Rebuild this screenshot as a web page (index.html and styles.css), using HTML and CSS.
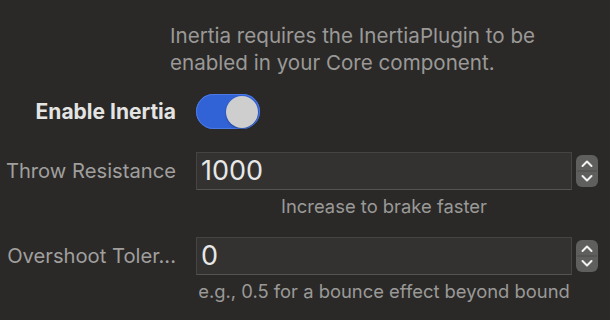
FILE: index.html
```html
<!DOCTYPE html>
<html lang="en">
<head>
    <meta charset="UTF-8">
    <title>Inertia settings</title>
    <link rel="stylesheet" href="styles.css">
</head>
<body>
    <div class="panel">
        <p class="note">Inertia requires the InertiaPlugin to be enabled in your Core component.</p>

        <div class="row row-toggle">
            <label class="label label-strong">Enable Inertia</label>
            <div class="control">
                <div class="switch on"><span class="knob"></span></div>
            </div>
        </div>

        <div class="row row-field">
            <label class="label">Throw Resistance</label>
            <div class="control">
                <div class="field">
                    <div class="input">1000</div>
                    <div class="stepper">
                        <svg width="22" height="32" viewBox="0 0 22 32">
                            <line x1="1" y1="16" x2="21" y2="16" stroke="#4c4c4c" stroke-width="1"/>
                            <polyline points="6.5,11 11,6.5 15.5,11" fill="none" stroke="#f2f2f2" stroke-width="2" stroke-linecap="round" stroke-linejoin="round"/>
                            <polyline points="6.5,21 11,25.5 15.5,21" fill="none" stroke="#f2f2f2" stroke-width="2" stroke-linecap="round" stroke-linejoin="round"/>
                        </svg>
                    </div>
                </div>
                <div class="help">Increase to brake faster</div>
            </div>
        </div>

        <div class="row row-field">
            <label class="label">Overshoot Toler...</label>
            <div class="control">
                <div class="field">
                    <div class="input">0</div>
                    <div class="stepper">
                        <svg width="22" height="32" viewBox="0 0 22 32">
                            <line x1="1" y1="16" x2="21" y2="16" stroke="#4c4c4c" stroke-width="1"/>
                            <polyline points="6.5,11 11,6.5 15.5,11" fill="none" stroke="#f2f2f2" stroke-width="2" stroke-linecap="round" stroke-linejoin="round"/>
                            <polyline points="6.5,21 11,25.5 15.5,21" fill="none" stroke="#f2f2f2" stroke-width="2" stroke-linecap="round" stroke-linejoin="round"/>
                        </svg>
                    </div>
                </div>
                <div class="help">e.g., 0.5 for a bounce effect beyond bound</div>
            </div>
        </div>
    </div>
</body>
</html>
```

FILE: styles.css
```css
/* Panneau de réglages Inertia (thème sombre) */
html, body {
    margin: 0;
    background: #2a2927;
}

body {
    font-family: Inter, "Noto Sans", sans-serif;
    color: #9d9d9c;
    width: 610px;
    height: 320px;
    overflow: hidden;
}

.panel {
    padding: 22px 12px 0 0;
}

.note {
    margin: 0 0 0 170px;
    font-size: 20.6px;
    line-height: 27px;
    color: #9a9998;
}

.row {
    display: grid;
    grid-template-columns: 176px 1fr;
    column-gap: 20px;
}

.label {
    text-align: right;
    font-size: 20.2px;
    color: #a09f9e;
    white-space: nowrap;
}

.label-strong {
    font-size: 21px;
    font-weight: 700;
    color: #e4e4e3;
}

.row-toggle {
    align-items: center;
    margin-top: 18px;
}

.switch {
    width: 64px;
    height: 35px;
    border-radius: 18px;
    background: #3263d6;
    box-shadow: inset 0 0 0 1px #4a78e4;
    display: flex;
    align-items: center;
    justify-content: flex-end;
    padding: 0 2px;
    box-sizing: border-box;
}

.knob {
    width: 32px;
    height: 32px;
    border-radius: 50%;
    background: #cecece;
    box-shadow: 0 1px 2px rgba(0,0,0,0.35);
}

.row-field {
    margin-top: 23px;
}

.row-field + .row-field {
    margin-top: 20px;
}

.row-field .label {
    line-height: 38px;
}

.field {
    display: flex;
    align-items: center;
    gap: 4px;
}

.input {
    width: 376px;
    height: 38px;
    box-sizing: border-box;
    background: #333230;
    border: 1px solid #454442;
    border-bottom-color: #555452;
    padding: 0 4px;
    font-size: 27px;
    line-height: 36px;
    color: #e8e8e8;
}

.stepper {
    width: 22px;
    height: 32px;
    border-radius: 6px;
    background: #5f5f5e;
    display: flex;
}

.help {
    width: 376px;
    text-align: center;
    font-size: 18.4px;
    line-height: 22px;
    margin-top: 5px;
    color: #9a9998;
    white-space: nowrap;
}
```
